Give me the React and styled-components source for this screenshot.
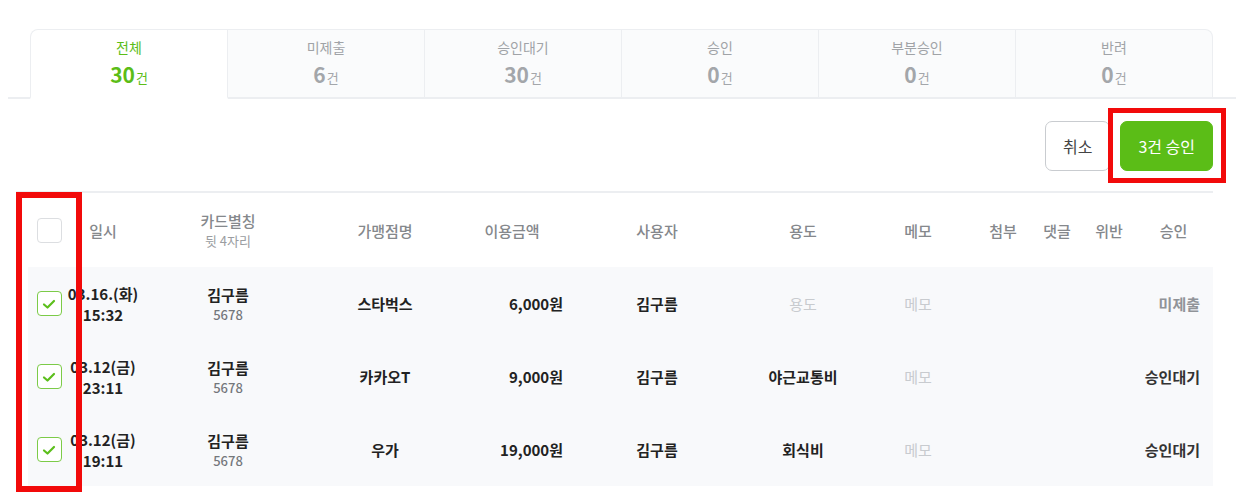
import styled, { createGlobalStyle } from "styled-components";

const GlobalStyle = createGlobalStyle`
  body {
    margin: 0;
    background: #fff;
    font-family: "Noto Sans CJK KR", "Noto Sans", sans-serif;
  }
`;

const GREEN = "#5bbd17";

const Page = styled.div`
  width: 1236px;
  height: 492px;
  padding-top: 29px;
  box-sizing: border-box;
  overflow: hidden;
`;

const TabBar = styled.div`
  display: flex;
  margin-left: 8px;
  padding: 0 23px 0 22px;
  border-bottom: 2px solid #eceef1;
`;

const Tab = styled.div`
  flex: 1;
  height: 70px;
  margin-bottom: -2px;
  display: flex;
  flex-direction: column;
  align-items: center;
  justify-content: center;
  gap: 4px;
  box-sizing: border-box;
  background: ${(p) => (p.active ? "#fff" : "#fafbfc")};
  border: 1px solid #eceef1;
  border-left-width: ${(p) => (p.first ? "1px" : "0")};
  border-bottom: ${(p) => (p.active ? "2px solid #fff" : "2px solid #eceef1")};
  border-radius: ${(p) => (p.first ? "8px 0 0 0" : p.last ? "0 8px 0 0" : "0")};
  color: ${(p) => (p.active ? GREEN : "#a3a6aa")};
`;

const TabLabel = styled.div`
  font-size: 14px;
  line-height: 20px;
  color: ${(p) => (p.active ? GREEN : "#a0a3a7")};
`;

const TabCount = styled.div`
  font-size: 21px;
  font-weight: 700;
  line-height: 27px;
  span {
    font-size: 13px;
    font-weight: 400;
    margin-left: 1px;
  }
`;

const Toolbar = styled.div`
  display: flex;
  justify-content: flex-end;
  gap: 10px;
  padding: 22px 23px 0 0;
  height: 50px;
`;

const Button = styled.button`
  height: 50px;
  padding: 0 17px;
  border-radius: 7px;
  font-family: inherit;
  font-size: 16px;
  border: 1px solid ${(p) => (p.primary ? GREEN : "#c9ccd0")};
  background: ${(p) => (p.primary ? GREEN : "#fff")};
  color: ${(p) => (p.primary ? "#fff" : "#444")};
`;

const Marked = styled.div`
  position: relative;
  &::after {
    content: "";
    position: absolute;
    inset: -13px -13px -12px -12px;
    border: 5px solid #f20a0a;
    pointer-events: none;
  }
`;

const Table = styled.div`
  position: relative;
  margin: 20px 23px 0 16px;
  border-top: 2px solid #eceef1;
`;

const cols = "42px 66px 184px 130px 124px 166px 126px 104px 66px 42px 62px 73px";

const HeadRow = styled.div`
  display: grid;
  grid-template-columns: ${cols};
  height: 74px;
  margin-left: 12px;
  align-items: center;
`;

const Row = styled.div`
  display: grid;
  grid-template-columns: ${cols};
  height: 73px;
  margin-left: 12px;
  align-items: center;
  background: #f8f9fb;
  &:last-child {
    border-bottom: 1px solid #eceef1;
  }
`;

const Cell = styled.div`
  display: flex;
  flex-direction: column;
  align-items: ${(p) => (p.right ? "flex-end" : "center")};
  padding-right: ${(p) => p.pr || 0}px;
  white-space: nowrap;
  font-size: 15px;
  line-height: 21px;
`;

const HeadText = styled.div`
  color: #85888c;
  font-weight: 500;
`;

const HeadSub = styled.div`
  color: #9a9da1;
  font-size: 13px;
  line-height: 19px;
`;

const Strong = styled.div`
  color: ${(p) => p.color || "#222"};
  font-weight: 700;
`;

const Sub = styled.div`
  color: #74777b;
  font-size: 13px;
  font-weight: 500;
  line-height: 19px;
`;

const Placeholder = styled.div`
  color: #c8cbcf;
`;

const Check = styled.div`
  width: 25px;
  height: 25px;
  box-sizing: border-box;
  border-radius: 4px;
  background: #fff;
  border: 1px solid ${(p) => (p.checked ? "#7ccb48" : "#dcdee1")};
  display: flex;
  align-items: center;
  justify-content: center;
`;

const ColumnMark = styled.div`
  position: absolute;
  left: 0;
  top: -1px;
  width: 66px;
  height: 300px;
  box-sizing: border-box;
  border: 6px solid #f20a0a;
  pointer-events: none;
`;

const tabs = [
  ["전체", 30],
  ["미제출", 6],
  ["승인대기", 30],
  ["승인", 0],
  ["부분승인", 0],
  ["반려", 0],
];

const rows = [
  { date: "03.16.(화)", time: "15:32", shop: "스타벅스", amount: "6,000원", use: null, status: "미제출" },
  { date: "03.12(금)", time: "23:11", shop: "카카오T", amount: "9,000원", use: "야근교통비", status: "승인대기" },
  { date: "03.12(금)", time: "19:11", shop: "우가", amount: "19,000원", use: "회식비", status: "승인대기" },
];

function Checkbox({ checked }) {
  return (
    <Check checked={checked}>
      {checked && (
        <svg width="16" height="16" viewBox="0 0 16 16" fill="none">
          <polyline points="3,8.5 6.5,11.5 13,5" stroke="#5cbf1c" strokeWidth="2.2" strokeLinecap="round" strokeLinejoin="round" />
        </svg>
      )}
    </Check>
  );
}

export default function App() {
  return (
    <Page>
      <GlobalStyle />
      <TabBar>
        {tabs.map(([label, n], i) => (
          <Tab key={label} active={i === 0} first={i === 0} last={i === tabs.length - 1}>
            <TabLabel active={i === 0}>{label}</TabLabel>
            <TabCount>
              {n}
              <span>건</span>
            </TabCount>
          </Tab>
        ))}
      </TabBar>
      <Toolbar>
        <Button>취소</Button>
        <Marked>
          <Button primary>3건 승인</Button>
        </Marked>
      </Toolbar>
      <Table>
        <HeadRow>
          <Cell><Checkbox /></Cell>
          <Cell><HeadText>일시</HeadText></Cell>
          <Cell>
            <HeadText>카드별칭</HeadText>
            <HeadSub>뒷 4자리</HeadSub>
          </Cell>
          <Cell><HeadText>가맹점명</HeadText></Cell>
          <Cell><HeadText>이용금액</HeadText></Cell>
          <Cell><HeadText>사용자</HeadText></Cell>
          <Cell><HeadText>용도</HeadText></Cell>
          <Cell><HeadText>메모</HeadText></Cell>
          <Cell><HeadText>첨부</HeadText></Cell>
          <Cell><HeadText>댓글</HeadText></Cell>
          <Cell><HeadText>위반</HeadText></Cell>
          <Cell pr={6}><HeadText>승인</HeadText></Cell>
        </HeadRow>
        {rows.map((r, i) => (
          <Row key={i}>
            <Cell><Checkbox checked /></Cell>
            <Cell>
              <Strong>{r.date}</Strong>
              <Strong>{r.time}</Strong>
            </Cell>
            <Cell>
              <Strong>김구름</Strong>
              <Sub>5678</Sub>
            </Cell>
            <Cell><Strong>{r.shop}</Strong></Cell>
            <Cell right pr={11}><Strong>{r.amount}</Strong></Cell>
            <Cell><Strong>김구름</Strong></Cell>
            <Cell>{r.use ? <Strong>{r.use}</Strong> : <Placeholder>용도</Placeholder>}</Cell>
            <Cell><Placeholder>메모</Placeholder></Cell>
            <Cell />
            <Cell />
            <Cell />
            <Cell right pr={13}>
              <Strong color={r.status === "미제출" ? "#909398" : "#333"}>{r.status}</Strong>
            </Cell>
          </Row>
        ))}
        <ColumnMark />
      </Table>
    </Page>
  );
}
